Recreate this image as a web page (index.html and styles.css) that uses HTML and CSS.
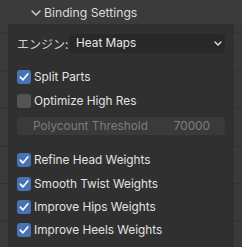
FILE: index.html
```html
<!DOCTYPE html>
<html>
<head>
<meta charset="utf-8">
<link rel="stylesheet" href="styles.css">
</head>
<body>
<div class="header">
  <svg class="hchev" width="10" height="6" viewBox="0 0 10 6"><path d="M1 1 L5 5 L9 1" fill="none" stroke="#d8d8d8" stroke-width="1.3" stroke-linecap="round" stroke-linejoin="round"/></svg>
  <span class="htitle">Binding Settings</span>
</div>
<div class="panel">
  <div class="engine">
    <span class="elabel">エンジン:</span>
    <div class="select">
      <span>Heat Maps</span>
      <svg class="schev" width="8" height="5" viewBox="0 0 8 5"><path d="M1 1 L4 4 L7 1" fill="none" stroke="#e0e0e0" stroke-width="1.4" stroke-linecap="round" stroke-linejoin="round"/></svg>
    </div>
  </div>

  <div class="row first">
    <span class="cb on"><svg width="14" height="14" viewBox="0 0 14 14"><path d="M3.3 7.2 L6 9.8 L10.8 4" fill="none" stroke="#fff" stroke-width="1.7" stroke-linecap="round" stroke-linejoin="round"/></svg></span>
    <span class="lbl">Split Parts</span>
  </div>
  <div class="row">
    <span class="cb"></span>
    <span class="lbl">Optimize High Res</span>
  </div>
  <div class="field">
    <span>Polycount Threshold</span>
    <span>70000</span>
  </div>

  <div class="row group">
    <span class="cb on"><svg width="14" height="14" viewBox="0 0 14 14"><path d="M3.3 7.2 L6 9.8 L10.8 4" fill="none" stroke="#fff" stroke-width="1.7" stroke-linecap="round" stroke-linejoin="round"/></svg></span>
    <span class="lbl">Refine Head Weights</span>
  </div>
  <div class="row">
    <span class="cb on"><svg width="14" height="14" viewBox="0 0 14 14"><path d="M3.3 7.2 L6 9.8 L10.8 4" fill="none" stroke="#fff" stroke-width="1.7" stroke-linecap="round" stroke-linejoin="round"/></svg></span>
    <span class="lbl">Smooth Twist Weights</span>
  </div>
  <div class="row tight">
    <span class="cb on"><svg width="14" height="14" viewBox="0 0 14 14"><path d="M3.3 7.2 L6 9.8 L10.8 4" fill="none" stroke="#fff" stroke-width="1.7" stroke-linecap="round" stroke-linejoin="round"/></svg></span>
    <span class="lbl">Improve Hips Weights</span>
  </div>
  <div class="row tight">
    <span class="cb on"><svg width="14" height="14" viewBox="0 0 14 14"><path d="M3.3 7.2 L6 9.8 L10.8 4" fill="none" stroke="#fff" stroke-width="1.7" stroke-linecap="round" stroke-linejoin="round"/></svg></span>
    <span class="lbl">Improve Heels Weights</span>
  </div>
</div>
</body>
</html>
```
FILE: styles.css
```css
html, body {
  margin: 0;
  padding: 0;
}
body {
  width: 242px;
  height: 247px;
  overflow: hidden;
  background-color: #3a3a3a;
  background-image: repeating-linear-gradient(to bottom, transparent 0, transparent 32.6px, #2f2f2f 32.6px, #2f2f2f 33.6px, transparent 33.6px, transparent 37.6px);
  background-size: 100% 37.6px;
  background-position: 0 0;
  font-family: Inter, "Noto Sans", sans-serif;
  font-size: 11.8px;
  color: #e4e4e4;
  display: flex;
  flex-direction: column;
}
.header {
  height: 24px;
  flex: none;
  background: #3b3b3b;
  display: flex;
  align-items: center;
  padding-left: 31px;
}
.hchev {
  margin-right: 3px;
  margin-top: 1px;
}
.htitle {
  font-size: 12.2px;
  color: #dcdcdc;
  margin-top: 1px;
}
.panel {
  flex: 1;
  margin: 0 8px;
  background: #303030;
  padding: 9px 9px 0 9px;
  display: flex;
  flex-direction: column;
}
.engine {
  height: 20px;
  display: flex;
  align-items: center;
}
.elabel {
  font-family: "Noto Sans CJK JP", Inter, sans-serif;
  font-size: 12px;
  color: #cfcfcf;
  width: 52px;
}
.select {
  flex: 1;
  height: 19px;
  background: #282828;
  border-radius: 4px;
  display: flex;
  align-items: center;
  justify-content: space-between;
  padding: 0 3px 0 7px;
  color: #e6e6e6;
}
.row {
  height: 22px;
  display: flex;
  align-items: center;
  margin-top: 2px;
}
.row.first { margin-top: 13px; }
.row.group { margin-top: 14px; }
.row.tight { margin-top: 1px; }
.cb {
  width: 14px;
  height: 14px;
  border-radius: 3px;
  background: #545454;
  flex: none;
  margin-right: 3px;
  display: flex;
}
.cb.on { background: #4772b3; }
.lbl { color: #e2e2e2; }
.field {
  margin-top: 5px;
  height: 18px;
  background: #3a3a3a;
  border-radius: 4px;
  display: flex;
  align-items: center;
  justify-content: space-between;
  padding: 0 15px 0 16px;
  color: #7c7c7c;
}
```
